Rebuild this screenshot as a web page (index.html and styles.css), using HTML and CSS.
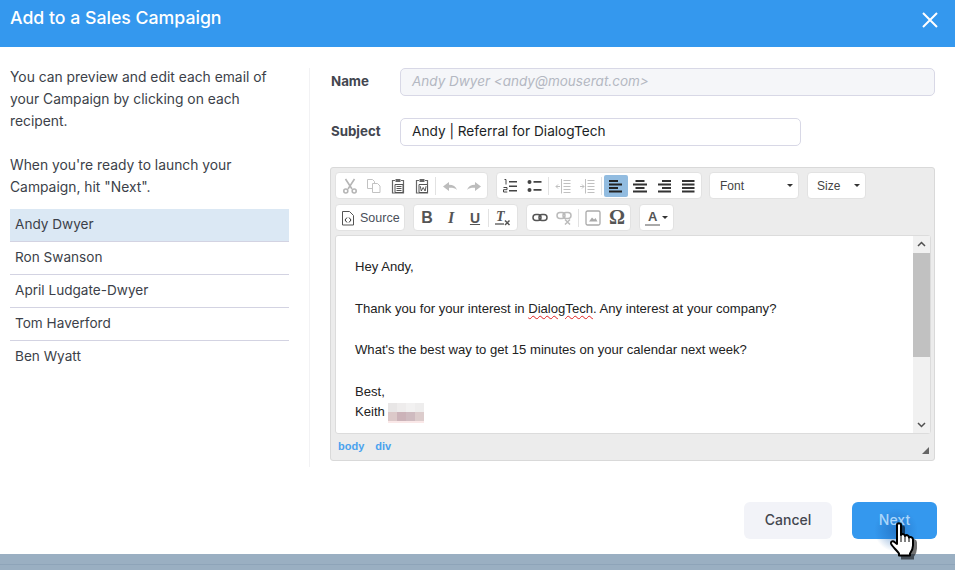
FILE: index.html
```html
<!DOCTYPE html>
<html lang="en">
<head>
<meta charset="utf-8">
<title>Add to a Sales Campaign</title>
<link rel="stylesheet" href="styles.css">
</head>
<body>
<header class="head">
  <h1 class="title">Add to a Sales Campaign</h1>
  <svg class="close" width="16" height="16" viewBox="0 0 16 16"><path d="M1 1l14 14M15 1L1 15" stroke="#fff" stroke-width="2" fill="none"/></svg>
</header>
<main class="main">
  <aside class="side">
    <p class="intro">You can preview and edit each email of your Campaign by clicking on each recipent.</p>
    <p class="intro gap">When you're ready to launch your Campaign, hit "Next".</p>
    <ul class="people">
      <li class="person on">Andy Dwyer</li>
      <li class="person">Ron Swanson</li>
      <li class="person">April Ludgate-Dwyer</li>
      <li class="person">Tom Haverford</li>
      <li class="person">Ben Wyatt</li>
    </ul>
  </aside>
  <section class="form">
    <div class="row">
      <label class="label">Name</label>
      <div class="field off">Andy Dwyer &lt;andy@mouserat.com&gt;</div>
    </div>
    <div class="row">
      <label class="label">Subject</label>
      <div class="field subj">Andy | Referral for DialogTech</div>
    </div>
    <div class="editor">
      <div class="tools">
        <div class="grp g1">
          <span class="btn"><svg width="16" height="16" viewBox="0 0 16 16"><g fill="none" stroke="#b5b5b5" stroke-width="1.6"><path d="M3.500 1l6.500 10M12.500 1L6 11"/><circle cx="3.800" cy="13" r="2"/><circle cx="12.200" cy="13" r="2"/></g></svg></span>
          <span class="btn"><svg width="16" height="16" viewBox="0 0 16 16"><g fill="#fff" stroke="#c2c2c2"><path d="M1.500 1.500h5l2 2v7h-7z"/><path d="M6.500 5.500h5l2.500 2.500v6.500h-7.500z"/></g></svg></span>
          <span class="btn"><svg width="16" height="16" viewBox="0 0 16 16"><path d="M5 2.500H2.500v12.500h11V2.500H11" fill="none" stroke="#666" stroke-width="1.200"/><path d="M5.500 1h5v3h-5z" fill="#666"/><path d="M5 6.500h8v8H5z" fill="#fff" stroke="#555"/><path d="M6.500 8.500h5M6.500 10.500h5M6.500 12.500h5" stroke="#555"/></svg></span>
          <span class="btn"><svg width="16" height="16" viewBox="0 0 16 16"><path d="M5 2.500H2.500v12.500h11V2.500H11" fill="none" stroke="#666" stroke-width="1.200"/><path d="M5.500 1h5v3h-5z" fill="#666"/><path d="M5 6.500h8.500v8H5z" fill="#fff" stroke="#555"/><path d="M6.300 8.200l1 4.800 1.900-3.500 1.900 3.500 1-4.800" fill="none" stroke="#444" stroke-width=".9"/></svg></span>
          <i class="sep"></i>
          <span class="btn"><svg width="16" height="16" viewBox="0 0 16 16"><path d="M1 8.500L7 4v2.800c4 0 7 1.700 8 5.200-2-2-4.500-2.300-8-2.200V13z" fill="#bcbcbc"/></svg></span>
          <span class="btn"><svg width="16" height="16" viewBox="0 0 16 16"><path d="M15 8.500L9 4v2.800c-4 0-7 1.700-8 5.200 2-2 4.500-2.300 8-2.200V13z" fill="#bcbcbc"/></svg></span>
        </div>
        <div class="grp">
          <span class="btn"><svg width="16" height="16" viewBox="0 0 16 16"><path d="M7 3h8v1.500H7zM7 7.500h8V9H7zM7 12h8v1.500H7z" fill="#444"/><path d="M2.500 1.500h1.500v5" fill="none" stroke="#444"/><path d="M1.500 9.500h3.500v2.200H1.500v2.300h3.800" fill="none" stroke="#444"/></svg></span>
          <span class="btn"><svg width="16" height="16" viewBox="0 0 16 16"><circle cx="3.500" cy="4" r="2" fill="#444"/><circle cx="3.500" cy="12" r="2" fill="#444"/><path d="M7.500 3h8v1.800h-8zM7.500 11h8v1.800h-8z" fill="#444"/></svg></span>
          <i class="sep"></i>
          <span class="btn"><svg width="16" height="16" viewBox="0 0 16 16"><path d="M8.500 2.500h7M8.500 5.500h7M8.500 8.500h7M8.500 11.500h7M8.500 14.500h7M6.500 1v14.500" stroke="#c0c0c0" fill="none"/><path d="M1 8.500h4M3 6.500l-2 2 2 2" stroke="#c0c0c0" fill="none"/></svg></span>
          <span class="btn"><svg width="16" height="16" viewBox="0 0 16 16"><path d="M8.500 2.500h7M8.500 5.500h7M8.500 8.500h7M8.500 11.500h7M8.500 14.500h7M6.500 1v14.500" stroke="#c0c0c0" fill="none"/><path d="M1 8.500h4M3 6.500l2 2-2 2" stroke="#c0c0c0" fill="none"/></svg></span>
          <i class="sep"></i>
          <span class="btn act"><svg width="14" height="14" viewBox="0 0 14 14"><path d="M0 1h9v2H0zM0 4.500h13v2H0zM0 8h9v2H0zM0 11.500h13v2H0z" fill="#222"/></svg></span>
          <span class="btn"><svg width="14" height="14" viewBox="0 0 14 14"><path d="M2.500 1h9v2h-9zM0 4.500h14v2H0zM2.500 8h9v2h-9zM0 11.500h14v2H0z" fill="#333"/></svg></span>
          <span class="btn"><svg width="14" height="14" viewBox="0 0 14 14"><path d="M5 1h9v2H5zM1 4.500h13v2H1zM5 8h9v2H5zM1 11.500h13v2H1z" fill="#333"/></svg></span>
          <span class="btn"><svg width="14" height="14" viewBox="0 0 14 14"><path d="M1 1h12.500v2H1zM1 4.500h12.500v2H1zM1 8h12.500v2H1zM1 11.500h12.500v2H1z" fill="#333"/></svg></span>
        </div>
        <div class="grp combo font">Font<i class="caret"></i></div>
        <div class="grp combo size">Size<i class="caret"></i></div>
        <div class="grp source"><svg width="14" height="16" viewBox="0 0 14 16"><path d="M1.500 1.500h7l4 4v9.500h-11z" fill="#fff" stroke="#555"/><path d="M6 7.500l-2 2.500 2 2.500M8 7.500l2 2.500-2 2.500" fill="none" stroke="#333"/></svg><span class="srctxt">Source</span></div>
        <div class="grp g3">
          <span class="btn fmt b">B</span>
          <span class="btn fmt it">I</span>
          <span class="btn fmt u">U</span>
          <i class="sep"></i>
          <span class="btn"><svg width="18" height="16" viewBox="0 0 18 16"><text class="tx" x="2" y="11">T</text><path d="M1 14h9" stroke="#555" stroke-width="1.300"/><path d="M11 10.500l4.500 4.500M15.500 10.500L11 15" stroke="#555" stroke-width="1.500"/></svg></span>
        </div>
        <div class="grp">
          <span class="btn"><svg width="16" height="12" viewBox="0 0 16 12"><g fill="none" stroke="#555" stroke-width="1.500"><rect x="1" y="2.500" width="8" height="6" rx="3"/><rect x="7" y="2.500" width="8" height="6" rx="3"/></g></svg></span>
          <span class="btn"><svg width="16" height="14" viewBox="0 0 16 14"><g fill="none" stroke="#bbb" stroke-width="1.500"><rect x="1" y="1.500" width="8" height="6" rx="3"/><rect x="7" y="1.500" width="8" height="6" rx="3"/><path d="M9 8.500l5 5M14 8.500l-5 5"/></g></svg></span>
          <i class="sep"></i>
          <span class="btn"><svg width="16" height="16" viewBox="0 0 16 16"><rect x="1" y="1" width="14" height="14" rx="1.500" fill="#fff" stroke="#aaa" stroke-width="1.300"/><path d="M4 11.500l3-4 2 2 1.500-1.500 2 3.500z" fill="#aaa"/></svg></span>
          <span class="btn fmt om">Ω</span>
        </div>
        <div class="grp color"><span class="cola">A</span><i class="caret"></i></div>
      </div>
      <div class="pane">
        <div class="doc">
          <p class="line">Hey Andy,</p>
          <p class="line blank"></p>
          <p class="line">Thank you for your interest in <span class="typo">DialogTech</span>. Any interest at your company?</p>
          <p class="line blank"></p>
          <p class="line">What's the best way to get 15 minutes on your calendar next week?</p>
          <p class="line blank"></p>
          <p class="line">Best,</p>
          <p class="line">Keith <svg class="blur" width="36" height="20" viewBox="0 0 36 20"><path fill="#e8e6e6" d="M0 0h9v9H0z"/><path fill="#eeecec" d="M9 0h9v9H9z"/><path fill="#f2f1f1" d="M18 0h9v9h-9z"/><path fill="#eeeded" d="M27 0h9v9h-9z"/><path fill="#dcc9c9" d="M0 9h9v9H0z"/><path fill="#ccb3b9" d="M9 9h9v9H9z"/><path fill="#cfbbc0" d="M18 9h9v9h-9z"/><path fill="#dccccc" d="M27 9h9v9h-9z"/><path fill="#fae8e8" d="M0 18h36v2H0z"/></svg></p>
        </div>
        <div class="scroll">
          <svg class="arrow" width="17" height="17" viewBox="0 0 17 17"><path d="M5 10l3.500-3.500L12 10" fill="none" stroke="#505050" stroke-width="1.500"/></svg>
          <div class="track"><div class="thumb"></div></div>
          <svg class="arrow" width="17" height="17" viewBox="0 0 17 17"><path d="M5 7l3.500 3.500L12 7" fill="none" stroke="#505050" stroke-width="1.500"/></svg>
        </div>
      </div>
      <div class="status">
        <span class="crumb">body</span><span class="crumb">div</span>
        <svg class="grip" width="7" height="7" viewBox="0 0 7 7"><path d="M7 0v7H0z" fill="#666"/></svg>
      </div>
    </div>
  </section>
</main>
<footer class="foot">
  <button class="action cancel">Cancel</button>
  <button class="action next">Next
    <span class="halo"></span>
    <svg class="hand" width="32" height="42" viewBox="0 0 32 42"><path d="M9 4c0-2.500 4-2.500 4 0v10c1-1.500 4-1 4 1 1-1.500 4-1 4 1.500 1-1 4-.5 4 2v6c0 4-1.500 6-3 8v2H11v-2c-2-3-7-7-8-10-.5-2 2-3 3.500-1.500L9 23z" fill="#000" stroke="#000" stroke-width="2" transform="translate(3 3)" opacity=".55"/><path d="M9 4c0-2.500 4-2.500 4 0v10c1-1.500 4-1 4 1 1-1.500 4-1 4 1.500 1-1 4-.5 4 2v6c0 4-1.500 6-3 8v2H11v-2c-2-3-7-7-8-10-.5-2 2-3 3.500-1.500L9 23z" fill="#fff" stroke="#000" stroke-width="2" stroke-linejoin="round"/><path d="M13 14v7M17 15v6M21 16.500V21" stroke="#000" fill="none"/></svg>
  </button>
</footer>
<div class="strip"></div>
</body>
</html>
```
FILE: styles.css
```css
* { box-sizing: border-box; }
html, body { margin: 0; height: 100%; overflow: hidden; }
body {
  display: flex;
  flex-direction: column;
  background: #fff;
  color: #3c3f49;
  font-family: Inter, "Liberation Sans", sans-serif;
  font-size: 14px;
}
.head {
  height: 47px;
  flex: none;
  background: #3498ee;
  display: flex;
  justify-content: space-between;
  padding: 10px 17px 0 10px;
}
.title { margin: 0; color: #fff; font-family: Inter, sans-serif; font-weight: 500; font-size: 17.7px; line-height: 15px; height: 15px; }
.close { margin-top: 2px; }
.main { height: 399px; margin-top: 21px; flex: none; display: flex; padding-left: 10px; }
.side { width: 300px; border-right: 1px solid #f2f2f4; padding-right: 20px; }
.intro { margin: -2px 0 2px; line-height: 22px; font-size: 13.85px; }
.gap { margin-top: 22px; margin-bottom: 11px; }
.people { list-style: none; margin: 0; padding: 0; font-size: 13.6px; }
.person { height: 33px; line-height: 31px; padding-left: 5px; border-bottom: 1px solid #d3d3e2; }
.person:last-child { border-bottom: none; }
.on { background: #dbe8f4; }
.form { width: 605px; margin-left: 20px; }
.row { display: flex; align-items: center; margin-bottom: 22px; }
.label { width: 70px; padding-left: 1px; padding-bottom: 2px; font-weight: 700; font-size: 13.3px; color: #43464f; }
.field { height: 28px; border: 1px solid #d8d8e6; border-radius: 5px; padding-left: 11px; line-height: 24px; }
.off { width: 535px; background: #f5f6f9; color: #b4b8c2; font-style: italic; font-size: 13.5px; }
.subj { width: 401px; color: #1c1f26; font-size: 13.65px; }
.editor { width: 605px; height: 294px; margin-top: -1px; background: #ececec; border: 1px solid #d9d9d9; border-radius: 3px; padding: 4px 3px 0 4px; }
.tools { display: flex; flex-wrap: wrap; gap: 5px 8px; height: 63px; align-content: flex-start; }
.grp { height: 27px; background: #fff; border: 1px solid #e2e2e2; border-radius: 4px; display: flex; align-items: center; padding: 0 1px; flex: none; }
.g1 { padding: 0 1px 0 2px; }
.g1 .sep, .g3 .sep { margin-left: 1px; }
.g3 { width: 105px; }
.btn { width: 24px; height: 22px; display: flex; align-items: center; justify-content: center; flex: none; border-radius: 2px; }
.act { background: #92bce0; }
.sep { width: 1px; height: 18px; background: #e2e2e2; margin: 0 2px; flex: none; }
.combo { font-family: "Liberation Sans", sans-serif; font-size: 12px; color: #444; position: relative; padding-left: 10px; }
.font { width: 90px; margin-left: -1px; }
.size { width: 59px; padding-left: 9px; }
.caret { position: absolute; right: 5px; top: 11px; border: 3px solid transparent; border-top: 3px solid #333; border-bottom: 0; }
.source { width: 70px; padding-left: 5px; font-family: "Liberation Sans", sans-serif; font-size: 12.5px; color: #4a4f5a; }
.srctxt { margin-left: 5px; }
.fmt { font-family: "Liberation Serif", serif; font-size: 15px; color: #555; }
.b { font-family: "Liberation Sans", sans-serif; font-weight: 700; font-size: 16px; }
.it { font-family: "Liberation Serif", serif; font-style: italic; font-weight: 700; font-size: 16px; }
.u { font-family: "Liberation Sans", sans-serif; font-weight: 700; font-size: 14px; text-decoration: underline; }
.tx { font-family: "Liberation Serif", serif; font-weight: 700; font-style: italic; font-size: 14px; fill: #555; }
.om { font-size: 20px; font-weight: 700; }
.color { width: 35px; position: relative; padding-left: 5px; }
.cola { font-family: "Liberation Sans", sans-serif; font-weight: 700; font-size: 13px; color: #555; border-bottom: 2px solid #aaa; line-height: 14px; padding: 0 3px; }
.pane { width: 596px; height: 199px; background: #fff; border: 1px solid #dcdcdc; border-radius: 3px; display: flex; }
.doc { width: 578px; padding: 21px 19px 0; font-family: "Liberation Sans", sans-serif; font-size: 13.1px; color: #222; }
.line { margin: 0; height: 20.75px; line-height: 20.75px; white-space: nowrap; }
.typo { text-decoration: underline wavy #e02020; text-decoration-thickness: 1px; text-underline-offset: 2px; }
.blur { vertical-align: -7px; }
.scroll { width: 17px; background: #f1f1f1; display: flex; flex-direction: column; }
.arrow { flex: none; display: block; }
.track { flex: 1; }
.thumb { height: 104px; background: #c1c1c1; }
.status { position: relative; display: flex; gap: 11px; padding: 6px 0 0 3px; font-family: "Liberation Sans", sans-serif; font-size: 11px; font-weight: 700; color: #4aa2ee; }
.grip { position: absolute; right: 2px; top: 13px; }
.foot { flex: none; margin-top: 35px; height: 37px; display: flex; justify-content: flex-end; gap: 20px; padding-right: 18px; }
.action { border: 0; border-radius: 6px; height: 37px; font-family: Inter, sans-serif; font-size: 14px; font-weight: 500; padding: 0 0 2px; }
.cancel { width: 88px; background: #f2f3f8; color: #43464f; }
.next { width: 85px; background: #3498ee; color: #aad6fa; position: relative; isolation: isolate; }
.halo { position: absolute; left: 22px; top: 6px; width: 44px; height: 44px; border-radius: 50%; z-index: -1; background: radial-gradient(circle, rgba(30,100,180,.6), rgba(30,100,180,0) 70%); }
.hand { position: absolute; left: 36px; top: 19px; z-index: 2; }
.strip { flex: none; margin-top: 15px; height: 16px; background: linear-gradient(#9aafc2 10px, #8ea4b9 10px, #8ea4b9 11px, #9aafc2 11px); }
```
